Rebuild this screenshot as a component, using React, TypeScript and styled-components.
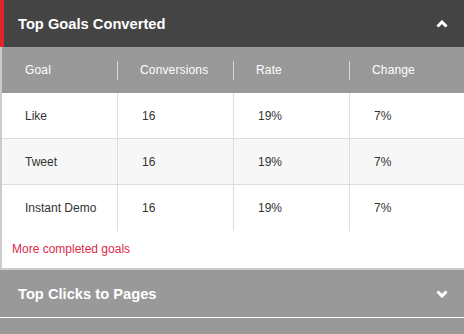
import styled, { createGlobalStyle } from "styled-components";

const Global = createGlobalStyle`
  html, body {
    margin: 0;
    padding: 0;
    background: #ffffff;
  }
  body {
    font-family: "Liberation Sans", Arial, sans-serif;
    width: 464px;
    overflow: hidden;
  }
`

const Panel = styled.div`
  display: flex;
  flex-direction: column;
  border-bottom: 2px solid #cccccc;
`

const PanelHeader = styled.div<{ $open?: boolean }>`
  display: flex;
  align-items: center;
  justify-content: space-between;
  height: 47px;
  padding: 0 16px 0 18px;
  box-sizing: border-box;
  background-color: ${p => (p.$open ? "#444444" : "#999999")};
  border-left: ${p => (p.$open ? "4px solid #e0262c" : "none")};
  padding-left: ${p => (p.$open ? "14px" : "18px")};
  color: #ffffff;
`

const Title = styled.h2`
  margin: 0;
  font-size: 14.7px;
  font-weight: bold;
`

const Body = styled.div`
  display: flex;
  flex-direction: column;
  border-left: 2px solid #cccccc;
`

const Table = styled.div`
  display: flex;
  flex-direction: column;
`

const HeadRow = styled.div`
  display: grid;
  grid-template-columns: 115px 116px 116px 1fr;
  align-items: center;
  height: 46px;
  background-color: #999999;
`

const HeadCell = styled.div<{ $first?: boolean }>`
  display: flex;
  align-items: center;
  height: 19px;
  padding-left: ${p => (p.$first ? "23px" : "22px")};
  font-size: 12px;
  letter-spacing: 0.15px;
  color: #ffffff;
  border-left: ${p => (p.$first ? "none" : "1px solid #d6d6d6")};
`

const Row = styled.div<{ $alt?: boolean; $last?: boolean }>`
  display: grid;
  grid-template-columns: 115px 116px 116px 1fr;
  height: 46px;
  background-color: ${p => (p.$alt ? "#f7f7f7" : "#ffffff")};
  border-bottom: ${p => (p.$last ? "none" : "1px solid #dddddd")};
  box-sizing: border-box;
`

const Cell = styled.div<{ $first?: boolean }>`
  display: flex;
  align-items: center;
  padding-left: ${p => (p.$first ? "23px" : "24px")};
  font-size: 12px;
  color: #333333;
  border-left: ${p => (p.$first ? "none" : "1px solid #dddddd")};
`

const MoreLink = styled.a`
  display: block;
  padding: 11px 10px 12px;
  font-size: 12px;
  color: #e0284a;
  text-decoration: none;
`

const Stripe = styled.div`
  height: 18px;
  background-color: #999999;
  border-top: 1px solid #ffffff;
`

function Chevron({ up }: { up?: boolean }) {
  return (
    <svg width="12" height="8" viewBox="0 0 12 8">
      <polyline
        points={up ? "1.5,6.5 6,2 10.5,6.5" : "1.5,1.5 6,6 10.5,1.5"}
        fill="none"
        stroke="#ffffff"
        strokeWidth="3"
      />
    </svg>
  );
}

const goals = [
  { goal: "Like", conversions: 16, rate: "19%", change: "7%" },
  { goal: "Tweet", conversions: 16, rate: "19%", change: "7%" },
  { goal: "Instant Demo", conversions: 16, rate: "19%", change: "7%" },
];

export default function App() {
  return (
    <>
      <Global />
      <Panel>
        <PanelHeader $open>
          <Title>Top Goals Converted</Title>
          <Chevron up />
        </PanelHeader>
        <Body>
          <Table>
            <HeadRow>
              <HeadCell $first>Goal</HeadCell>
              <HeadCell>Conversions</HeadCell>
              <HeadCell>Rate</HeadCell>
              <HeadCell>Change</HeadCell>
            </HeadRow>
            {goals.map((g, i) => (
              <Row key={g.goal} $alt={i % 2 === 1} $last={i === goals.length - 1}>
                <Cell $first>{g.goal}</Cell>
                <Cell>{g.conversions}</Cell>
                <Cell>{g.rate}</Cell>
                <Cell>{g.change}</Cell>
              </Row>
            ))}
          </Table>
          <MoreLink href="#">More completed goals</MoreLink>
        </Body>
      </Panel>
      <PanelHeader>
        <Title>Top Clicks to Pages</Title>
        <Chevron />
      </PanelHeader>
      <Stripe />
    </>
  );
}
